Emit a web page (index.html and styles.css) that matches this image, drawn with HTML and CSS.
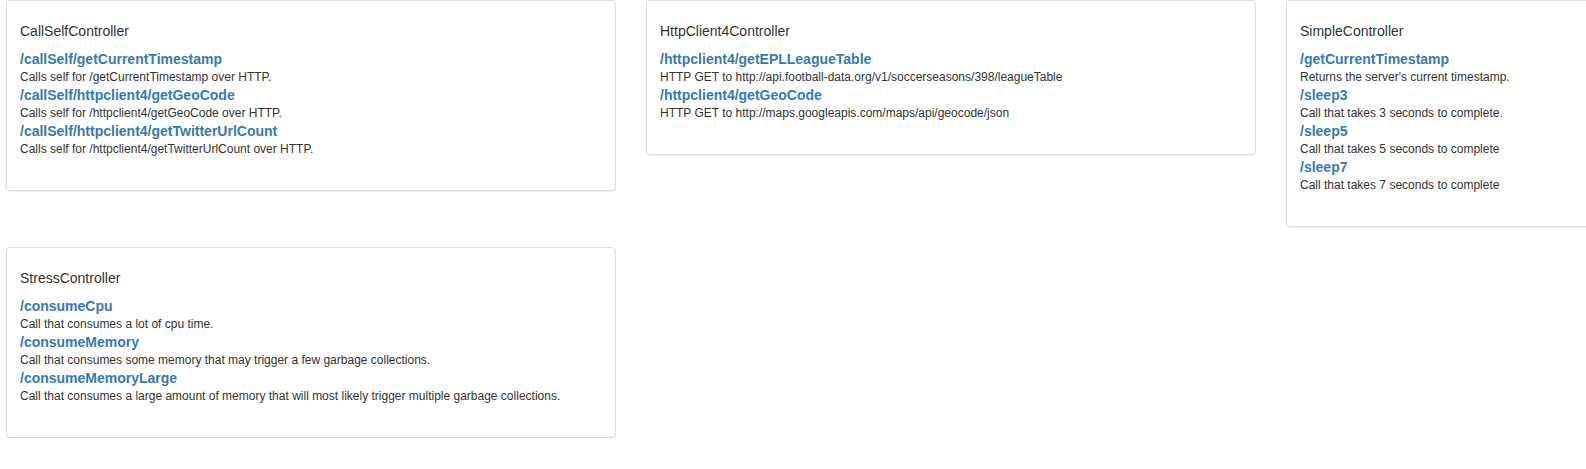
FILE: index.html
```html
<!DOCTYPE html>
<html lang="en">
<head>
<meta charset="utf-8">
<title>Controllers</title>
<link rel="stylesheet" href="styles.css">
</head>
<body>
<main class="grid">
  <section class="card">
    <h3 class="card-title">CallSelfController</h3>
    <dl class="endpoints">
      <dt><a class="endpoint" href="#">/callSelf/getCurrentTimestamp</a></dt>
      <dd class="desc">Calls self for /getCurrentTimestamp over HTTP.</dd>
      <dt><a class="endpoint" href="#">/callSelf/httpclient4/getGeoCode</a></dt>
      <dd class="desc">Calls self for /httpclient4/getGeoCode over HTTP.</dd>
      <dt><a class="endpoint" href="#">/callSelf/httpclient4/getTwitterUrlCount</a></dt>
      <dd class="desc">Calls self for /httpclient4/getTwitterUrlCount over HTTP.</dd>
    </dl>
  </section>
  <section class="card">
    <h3 class="card-title">HttpClient4Controller</h3>
    <dl class="endpoints">
      <dt><a class="endpoint" href="#">/httpclient4/getEPLLeagueTable</a></dt>
      <dd class="desc">HTTP GET to http://api.football-data.org/v1/soccerseasons/398/leagueTable</dd>
      <dt><a class="endpoint" href="#">/httpclient4/getGeoCode</a></dt>
      <dd class="desc">HTTP GET to http://maps.googleapis.com/maps/api/geocode/json</dd>
    </dl>
  </section>
  <section class="card">
    <h3 class="card-title">SimpleController</h3>
    <dl class="endpoints">
      <dt><a class="endpoint" href="#">/getCurrentTimestamp</a></dt>
      <dd class="desc">Returns the server's current timestamp.</dd>
      <dt><a class="endpoint" href="#">/sleep3</a></dt>
      <dd class="desc">Call that takes 3 seconds to complete.</dd>
      <dt><a class="endpoint" href="#">/sleep5</a></dt>
      <dd class="desc">Call that takes 5 seconds to complete</dd>
      <dt><a class="endpoint" href="#">/sleep7</a></dt>
      <dd class="desc">Call that takes 7 seconds to complete</dd>
    </dl>
  </section>
  <section class="card">
    <h3 class="card-title">StressController</h3>
    <dl class="endpoints">
      <dt><a class="endpoint" href="#">/consumeCpu</a></dt>
      <dd class="desc">Call that consumes a lot of cpu time.</dd>
      <dt><a class="endpoint" href="#">/consumeMemory</a></dt>
      <dd class="desc">Call that consumes some memory that may trigger a few garbage collections.</dd>
      <dt><a class="endpoint" href="#">/consumeMemoryLarge</a></dt>
      <dd class="desc">Call that consumes a large amount of memory that will most likely trigger multiple garbage collections.</dd>
    </dl>
  </section>
</main>
</body>
</html>
```

FILE: styles.css
```css
html, body {
  margin: 0;
  padding: 0;
  background: #fff;
  overflow: hidden;
}

body {
  font-family: "Liberation Sans", Arial, sans-serif;
  color: #333;
}

.grid {
  display: grid;
  grid-template-columns: repeat(3, 610px);
  column-gap: 30px;
  row-gap: 20px;
  align-items: start;
  padding: 0 0 0 6px;
  width: 1900px;
}

.card {
  background: #fff;
  border: 1px solid #ddd;
  border-radius: 4px;
  box-shadow: 0 1px 1px rgba(0, 0, 0, 0.05);
  padding: 20px 13px 32px;
}

.card-title {
  margin: 0 0 9px;
  font-size: 14px;
  font-weight: normal;
  line-height: 20px;
  color: #333;
}

.endpoints {
  margin: 0;
}

.endpoints dt {
  margin: 0;
  font-size: 14px;
  line-height: 19px;
  font-weight: bold;
}

.endpoint {
  color: #337ab7;
  text-decoration: none;
}

.desc {
  margin: 0;
  font-size: 12px;
  line-height: 17px;
  color: #333;
}
```
